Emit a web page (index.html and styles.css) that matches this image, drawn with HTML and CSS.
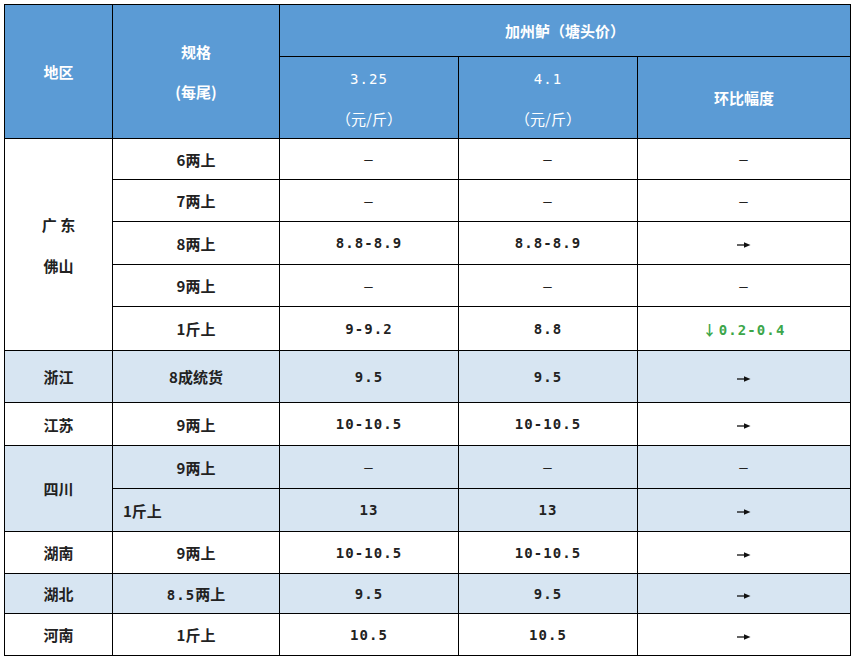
FILE: index.html
```html
<!DOCTYPE html>
<html lang="zh-CN">
<head>
<meta charset="utf-8">
<title>加州鲈（塘头价）</title>
<link rel="stylesheet" href="styles.css">
</head>
<body>
<table class="price-table">
  <colgroup>
    <col class="c-region">
    <col class="c-spec">
    <col class="c-price">
    <col class="c-price">
    <col class="c-change">
  </colgroup>
  <thead>
    <tr class="h1">
      <th rowspan="2" class="hd"><div class="lines">地区</div></th>
      <th rowspan="2" class="hd"><div class="lines"><span>规格</span><span>(每尾)</span></div></th>
      <th colspan="3" class="hd">加州鲈（塘头价）</th>
    </tr>
    <tr class="h2">
      <th class="hd light"><div class="lines tight"><span class="num">3.25</span><span>（元/斤）</span></div></th>
      <th class="hd light"><div class="lines tight"><span class="num">4.1</span><span>（元/斤）</span></div></th>
      <th class="hd">环比幅度</th>
    </tr>
  </thead>
  <tbody>
    <tr class="r41">
      <td rowspan="5" class="region"><div class="lines region-lines"><span>广 东</span><span>佛山</span></div></td>
      <td>6两上</td><td class="num dash">–</td><td class="num dash">–</td><td class="num dash">–</td>
    </tr>
    <tr class="r42"><td>7两上</td><td class="num dash">–</td><td class="num dash">–</td><td class="num dash">–</td></tr>
    <tr class="r43"><td>8两上</td><td class="num">8.8-8.9</td><td class="num">8.8-8.9</td><td><svg class="arrow" viewBox="0 0 14 8" width="14" height="8"><line x1="0" y1="4" x2="9" y2="4" stroke="#111" stroke-width="1.3"/><polygon points="7,1.3 13.5,4 7,6.7" fill="#111"/></svg></td></tr>
    <tr class="r42"><td>9两上</td><td class="num dash">–</td><td class="num dash">–</td><td class="num dash">–</td></tr>
    <tr class="r44"><td>1斤上</td><td class="num">9-9.2</td><td class="num">8.8</td><td class="num down"><span class="darr">↓</span>0.2-0.4</td></tr>

    <tr class="r53 alt"><td class="region">浙江</td><td>8成统货</td><td class="num">9.5</td><td class="num">9.5</td><td><svg class="arrow" viewBox="0 0 14 8" width="14" height="8"><line x1="0" y1="4" x2="9" y2="4" stroke="#111" stroke-width="1.3"/><polygon points="7,1.3 13.5,4 7,6.7" fill="#111"/></svg></td></tr>
    <tr class="r43"><td class="region">江苏</td><td>9两上</td><td class="num">10-10.5</td><td class="num">10-10.5</td><td><svg class="arrow" viewBox="0 0 14 8" width="14" height="8"><line x1="0" y1="4" x2="9" y2="4" stroke="#111" stroke-width="1.3"/><polygon points="7,1.3 13.5,4 7,6.7" fill="#111"/></svg></td></tr>
    <tr class="r43 alt"><td rowspan="2" class="region">四川</td><td>9两上</td><td class="num dash">–</td><td class="num dash">–</td><td class="num dash">–</td></tr>
    <tr class="r43 alt"><td class="left">1斤上</td><td class="num">13</td><td class="num">13</td><td><svg class="arrow" viewBox="0 0 14 8" width="14" height="8"><line x1="0" y1="4" x2="9" y2="4" stroke="#111" stroke-width="1.3"/><polygon points="7,1.3 13.5,4 7,6.7" fill="#111"/></svg></td></tr>
    <tr class="r42"><td class="region">湖南</td><td>9两上</td><td class="num">10-10.5</td><td class="num">10-10.5</td><td><svg class="arrow" viewBox="0 0 14 8" width="14" height="8"><line x1="0" y1="4" x2="9" y2="4" stroke="#111" stroke-width="1.3"/><polygon points="7,1.3 13.5,4 7,6.7" fill="#111"/></svg></td></tr>
    <tr class="r40 alt"><td class="region">湖北</td><td><span class="num">8.5</span>两上</td><td class="num">9.5</td><td class="num">9.5</td><td><svg class="arrow" viewBox="0 0 14 8" width="14" height="8"><line x1="0" y1="4" x2="9" y2="4" stroke="#111" stroke-width="1.3"/><polygon points="7,1.3 13.5,4 7,6.7" fill="#111"/></svg></td></tr>
    <tr class="r42"><td class="region">河南</td><td>1斤上</td><td class="num">10.5</td><td class="num">10.5</td><td><svg class="arrow" viewBox="0 0 14 8" width="14" height="8"><line x1="0" y1="4" x2="9" y2="4" stroke="#111" stroke-width="1.3"/><polygon points="7,1.3 13.5,4 7,6.7" fill="#111"/></svg></td></tr>
  </tbody>
</table>
</body>
</html>
```
FILE: styles.css
```css
html, body {
  margin: 0;
  padding: 0;
  background: #ffffff;
}
body {
  padding: 4px 0 0 4px;
  font-family: "Noto Sans CJK SC", "DejaVu Sans", sans-serif;
  color: #222222;
}
.price-table {
  border-collapse: collapse;
  table-layout: fixed;
  width: 846px;
  font-size: 15px;
}
.c-region { width: 108px; }
.c-spec { width: 167px; }
.c-price { width: 179px; }
.c-change { width: 213px; }

.price-table th,
.price-table td {
  border: 1px solid #000000;
  padding: 0;
  text-align: center;
  vertical-align: middle;
  font-weight: 700;
}
.hd {
  background: #5b9bd5;
  color: #ffffff;
}
.h1 { height: 52px; }
.h2 { height: 80px; }
.lines {
  display: flex;
  flex-direction: column;
  align-items: center;
  line-height: 40px;
}
.lines.tight { line-height: 39px; padding-top: 3px; }
.light { font-weight: 400 !important; }
.light .num { font-weight: 400; }
.region-lines { line-height: 41px; }

.num {
  font-family: "DejaVu Sans Mono", "Noto Sans CJK SC", monospace;
  font-size: 14px;
  letter-spacing: 1.1px;
  font-weight: 700;
}
.price-table td.dash { font-weight: 400; }
.alt td { background: #d7e5f2; }
.left { text-align: left !important; padding-left: 10px !important; }
.down { color: #3ca64a; }
.darr {
  font-family: "Noto Sans CJK SC", sans-serif;
  font-weight: 700;
  margin-right: 1px;
}
.arrow { display: inline-block; vertical-align: middle; }

.r40 { height: 40px; }
.r41 { height: 41px; }
.r42 { height: 42px; }
.r43 { height: 43px; }
.r44 { height: 44px; }
.r53 { height: 52px; }
```
